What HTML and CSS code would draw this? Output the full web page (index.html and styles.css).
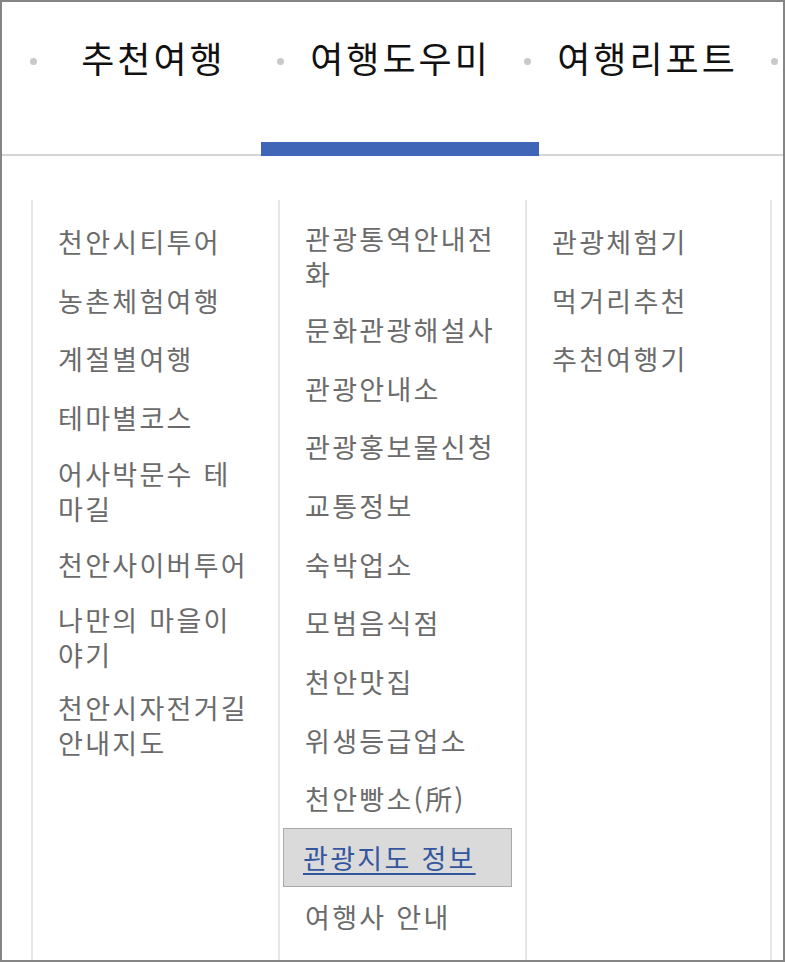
FILE: index.html
```html
<!DOCTYPE html>
<html lang="ko">
<head>
<meta charset="utf-8">
<title>여행도우미</title>
<link rel="stylesheet" href="styles.css">
</head>
<body>
<div class="frame">
  <nav class="gnb">
    <ul class="tabs">
      <li class="tab"><span class="dot"></span><span class="tab-label">추천여행</span></li>
      <li class="tab"><span class="dot"></span><span class="tab-label">여행도우미</span></li>
      <li class="tab"><span class="dot"></span><span class="tab-label">여행리포트</span></li>
      <li class="tab"><span class="dot"></span><span class="tab-label"></span></li>
    </ul>
    <span class="indicator"></span>
  </nav>
  <div class="columns">
    <ul class="col">
      <li class="item">천안시티투어</li>
      <li class="item">농촌체험여행</li>
      <li class="item">계절별여행</li>
      <li class="item">테마별코스</li>
      <li class="item">어사박문수 테마길</li>
      <li class="item">천안사이버투어</li>
      <li class="item">나만의 마을이야기</li>
      <li class="item">천안시자전거길 안내지도</li>
    </ul>
    <ul class="col">
      <li class="item">관광통역안내전화</li>
      <li class="item">문화관광해설사</li>
      <li class="item">관광안내소</li>
      <li class="item">관광홍보물신청</li>
      <li class="item">교통정보</li>
      <li class="item">숙박업소</li>
      <li class="item">모범음식점</li>
      <li class="item">천안맛집</li>
      <li class="item">위생등급업소</li>
      <li class="item">천안빵소(所)</li>
      <li class="item item-active"><a class="item-link" href="#">관광지도 정보</a></li>
      <li class="item">여행사 안내</li>
    </ul>
    <ul class="col col-last">
      <li class="item">관광체험기</li>
      <li class="item">먹거리추천</li>
      <li class="item">추천여행기</li>
    </ul>
  </div>
</div>
</body>
</html>
```

FILE: styles.css
```css
* {
  box-sizing: border-box;
}

html, body {
  margin: 0;
  padding: 0;
  background: #ffffff;
}

body {
  font-family: "Noto Sans CJK KR", "Noto Sans", sans-serif;
  overflow: hidden;
}

ul {
  list-style: none;
  margin: 0;
  padding: 0;
}

.frame {
  width: 785px;
  height: 962px;
  border: 2px solid #858585;
  display: flex;
  flex-direction: column;
  overflow: hidden;
}

.gnb {
  position: relative;
  height: 154px;
  flex: none;
  border-bottom: 2px solid #d5d5d5;
}

.tabs {
  display: flex;
  padding: 35px 0 0 28px;
  width: 1100px;
}

.tab {
  flex: none;
  width: 247px;
  display: flex;
  align-items: center;
  height: 40px;
}

.dot {
  flex: none;
  width: 7px;
  height: 7px;
  margin-top: 8px;
  border-radius: 50%;
  background: #c9c9c9;
}

.tab-label {
  width: 233px;
  text-align: center;
  font-size: 36px;
  line-height: 40px;
  letter-spacing: 3px;
  color: #111111;
  white-space: nowrap;
}

.indicator {
  position: absolute;
  left: 259px;
  bottom: -2px;
  width: 278px;
  height: 14px;
  background: #4066b7;
}

.columns {
  flex: 1;
  display: grid;
  grid-template-columns: 247px 247px 247px;
  padding: 44px 0 0 29px;
}

.col {
  border-left: 2px solid #e6e6e6;
  padding-top: 12px;
}

.col-last {
  border-right: 2px solid #e6e6e6;
}

.item {
  display: flex;
  align-items: center;
  min-height: 58.7px;
  margin: 0 13px 0 3px;
  padding: 8px 12px 8px 21px;
  border: 1px solid transparent;
  font-size: 27px;
  line-height: 35px;
  letter-spacing: 2.3px;
  color: #6b6b6b;
}

.item-active {
  background: #dadada;
  border-color: #a9a9a9;
  padding-left: 19px;
}

.item-link {
  color: #34569f;
  text-decoration: underline;
  text-underline-offset: 4px;
  text-decoration-thickness: 2px;
}
```
